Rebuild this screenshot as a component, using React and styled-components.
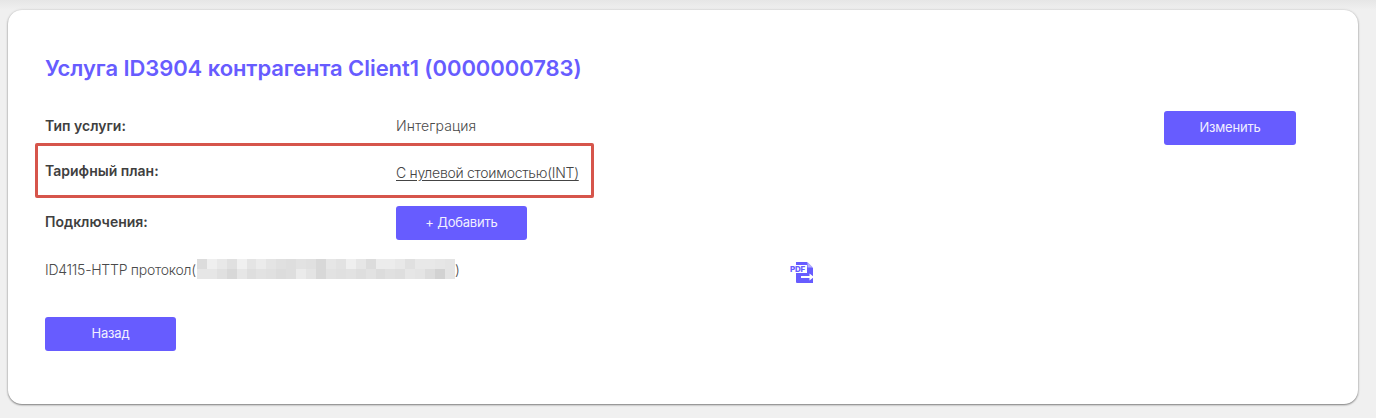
import React from 'react';
import styled, { createGlobalStyle } from 'styled-components';

const ACCENT = '#675cff';

const TOP_ROW = ['#dcdcdc', '#efefef', '#e8e8e8', '#e0e0e0', '#f0f0f0', '#e4e4e4', '#ebebeb', '#e4e4e4', '#e0e0e0', '#dedede', '#e2e2e2', '#e0e0e0', '#d8d8d8', '#e6e6e6', '#e2e2e2', '#efefef', '#e6e6e6', '#dcdcdc', '#ececec', '#ececec', '#e8e8e8', '#e0e0e0', '#e8e8e8', '#e8e8e8', '#e6e6e6', '#e4e4e4'];
const BOTTOM_ROW = ['#e6e6e6', '#e6e6e6', '#e0e0e0', '#d8d8d8', '#e6e6e6', '#dedede', '#e2e2e2', '#e0e0e0', '#dcdcdc', '#dedede', '#ebebeb', '#e4e4e4', '#d8d8d8', '#e2e2e2', '#e0e0e0', '#e2e2e2', '#dedede', '#e2e2e2', '#dcdcdc', '#e0e0e0', '#dedede', '#e6e6e6', '#e4e4e4', '#dcdcdc', '#d2d2d2', '#e4e4e4'];

const GlobalStyle = createGlobalStyle`
  html, body {
    margin: 0;
    height: 100%;
  }
  body {
    background: #f0f0f0;
    font-family: 'Inter', 'Noto Sans', sans-serif;
    overflow: hidden;
  }
`;

const Page = styled.div`
  height: 418px;
  box-sizing: border-box;
  padding: 10px 18px 14px 8px;
  background: linear-gradient(#e6e6e6, #f0f0f0 10px);
`;

const Card = styled.main`
  position: relative;
  height: 394px;
  box-sizing: border-box;
  padding: 43px 62px 0 37px;
  background: #fff;
  border-radius: 14px;
  box-shadow: 0 1px 2px rgba(0, 0, 0, 0.45), 0 0 3px rgba(0, 0, 0, 0.12);
`;

const Title = styled.h1`
  margin: 0 0 28px;
  color: ${ACCENT};
  font-size: 22px;
  line-height: 30px;
  font-weight: 600;
  letter-spacing: -0.07px;
`;

const Row = styled.div`
  display: grid;
  grid-template-columns: 351px 1fr auto;
  align-items: center;
  height: ${({ $height }) => $height}px;
  color: #444;
  font-size: 14px;
`;

const Label = styled.div`
  font-weight: 600;
  color: #3f3f3f;
  margin-top: ${({ $shift }) => $shift || 0}px;
`;

const Value = styled.div`
  color: #4a4a4a;
  font-weight: 300;
  letter-spacing: 0.1px;
  margin-top: ${({ $shift }) => $shift || 0}px;
`;

const PlanLink = styled.a`
  color: #444;
  font-weight: 300;
  letter-spacing: -0.27px;
  text-decoration: underline;
  text-underline-offset: 2px;
`;

const Button = styled.button`
  width: ${({ $width }) => $width || 131}px;
  height: 34px;
  padding: 0 0 3px;
  border: 0;
  border-radius: 3px;
  background: ${ACCENT};
  color: #f1efff;
  font-family: inherit;
  font-size: 13px;
  font-weight: 400;
  letter-spacing: -0.2px;
  cursor: pointer;
`;

const Highlight = styled.div`
  position: absolute;
  left: 27px;
  top: 133px;
  width: 559px;
  height: 55px;
  box-sizing: border-box;
  border: 3px solid #d6554b;
  border-radius: 2px;
  pointer-events: none;
`;

const Connection = styled.div`
  display: flex;
  align-items: center;
  height: 20px;
  margin-top: 19px;
  color: #4a4a4a;
  font-size: 14px;
  font-weight: 300;
  letter-spacing: -0.25px;
`;

const ConnectionName = styled.div`
  display: flex;
  align-items: center;
  width: 745px;
  white-space: nowrap;
`;

const Mosaic = styled.span`
  display: grid;
  grid-template-columns: repeat(26, 1fr);
  grid-auto-rows: 10px;
  width: 258px;
  margin-left: 1px;
`;

const MosaicCell = styled.i`
  background: ${({ $shade }) => $shade};
`;

const PdfIcon = styled.svg`
  display: block;
  flex: none;
  margin-top: 5px;
`;

const BackRow = styled.div`
  margin-top: 38px;
`;

const PdfExport = () => (
  <PdfIcon width="24" height="22" viewBox="0 0 24 22">
    <path d="M6 1h11l6 6v15H7a1 1 0 0 1-1-1z" fill={ACCENT} />
    <path d="M17.5 1l5.5 5.5h-5.5z" fill="#b4afff" />
    <rect x="0" y="4" width="17" height="8" fill="#fff" />
    <text x="0" y="11.2" fontFamily="Inter, sans-serif" fontSize="8" fontWeight="800" fill={ACCENT}>PDF</text>
    <path d="M11 15h8.5v-2.5L24 16l-4.5 3.5V17H11z" fill="#fff" />
  </PdfIcon>
);

export default function App() {
  return (
    <Page>
      <GlobalStyle />
      <Card>
        <Title>Услуга ID3904 контрагента Client1 (0000000783)</Title>
        <Row $height={34}>
          <Label $shift={-6}>Тип услуги:</Label>
          <Value $shift={-5}>Интеграция</Value>
          <Button $width={132}>Изменить</Button>
        </Row>
        <Row $height={61}>
          <Label $shift={-10}>Тарифный план:</Label>
          <Value $shift={-7}><PlanLink href="#">С нулевой стоимостью(INT)</PlanLink></Value>
        </Row>
        <Row $height={34}>
          <Label $shift={-4}>Подключения:</Label>
          <div><Button>+ Добавить</Button></div>
        </Row>
        <Connection>
          <ConnectionName>
            ID4115-HTTP протокол(
            <Mosaic>
              {[...TOP_ROW, ...BOTTOM_ROW].map((shade, i) => (
                <MosaicCell key={i} $shade={shade} />
              ))}
            </Mosaic>
            )
          </ConnectionName>
          <PdfExport />
        </Connection>
        <BackRow>
          <Button>Назад</Button>
        </BackRow>
        <Highlight />
      </Card>
    </Page>
  );
}
